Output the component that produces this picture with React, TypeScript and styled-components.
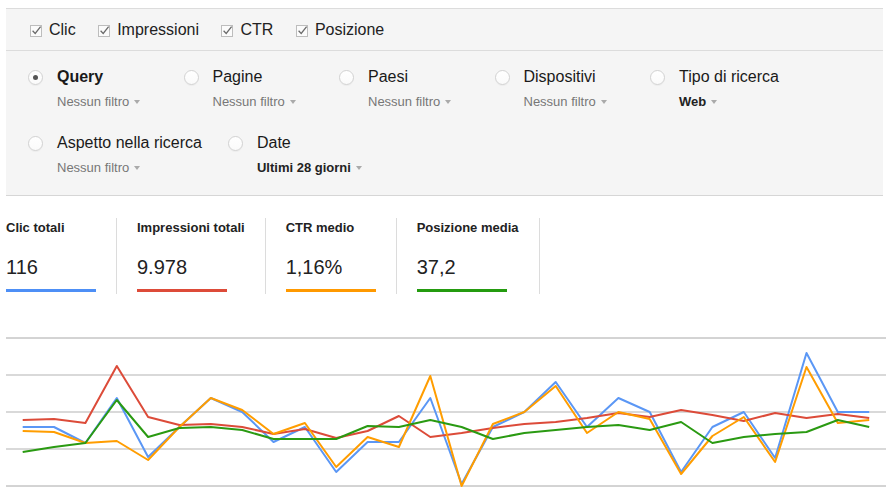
import React from "react";
import styled, { createGlobalStyle } from "styled-components";

const GlobalStyle = createGlobalStyle`
  body {
    margin: 0;
    background: #fff;
    font-family: "Liberation Sans", Arial, sans-serif;
    color: #222;
  }
`;

const Page = styled.div`
  padding: 8px 0 0 6px;
`;

const Panel = styled.div`
  width: 877px;
  background: #f5f5f5;
  border-top: 1px solid #dcdcdc;
  border-bottom: 1px solid #d6d6d6;
`;

const ToggleBar = styled.div`
  display: flex;
  align-items: center;
  height: 40px;
  padding: 1px 0 0 24px;
  border-bottom: 1px solid #dcdcdc;
`;

const ToggleItem = styled.label`
  display: flex;
  align-items: center;
  gap: 6px;
  margin-right: 22.5px;
  font-size: 16px;
  color: #222;
`;

const DimensionArea = styled.div`
  display: flex;
  flex-direction: column;
  gap: 23px;
  padding: 16px 0 19px 22px;
`;

const DimRow = styled.div`
  display: flex;
`;

const DimItem = styled.div`
  display: flex;
  align-items: flex-start;
  margin-right: 26px;
`;

const Radio = styled.span<{ $checked?: boolean }>`
  position: relative;
  box-sizing: border-box;
  width: 15px;
  height: 15px;
  margin: 3px 14px 0 0;
  border-radius: 50%;
  border: 1px solid #d2d2d2;
  background: linear-gradient(#fff, #fafafa);
  box-shadow: 0 1px 1px rgba(0, 0, 0, 0.04);

  &::after {
    content: "";
    display: ${(p) => (p.$checked ? "block" : "none")};
    position: absolute;
    left: 4px;
    top: 4px;
    width: 5px;
    height: 5px;
    border-radius: 50%;
    background: #555;
  }
`;

const DimText = styled.div`
  display: flex;
  flex-direction: column;
  min-width: 100.5px;
`;

const DimLabel = styled.div<{ $active?: boolean }>`
  font-size: 16px;
  line-height: 20px;
  font-weight: ${(p) => (p.$active ? 700 : 400)};
  color: #1a1a1a;
  white-space: nowrap;
`;

const DimFilter = styled.div<{ $set?: boolean }>`
  display: flex;
  align-items: center;
  margin-top: 7px;
  font-size: 13px;
  line-height: 16px;
  white-space: nowrap;
  font-weight: ${(p) => (p.$set ? 700 : 400)};
  color: ${(p) => (p.$set ? "#222" : "#777")};
`;

const Caret = styled.span`
  margin-left: 5px;
  width: 0;
  height: 0;
  border-left: 3.5px solid transparent;
  border-right: 3.5px solid transparent;
  border-top: 4px solid #aaa;
`;

const Metrics = styled.div`
  display: flex;
  margin-top: 22px;
`;

const Metric = styled.div`
  padding: 2px 20px 0 20px;
  border-right: 1px solid #dcdcdc;

  &:first-child {
    padding-left: 0;
  }
`;

const MetricLabel = styled.div`
  font-size: 13px;
  line-height: 16px;
  font-weight: 700;
  color: #222;
  white-space: nowrap;
`;

const MetricValue = styled.div`
  margin-top: 18px;
  font-size: 20px;
  line-height: 26px;
  color: #222;
`;

const MetricBar = styled.div<{ $color: string }>`
  width: 90px;
  height: 3px;
  margin-top: 9px;
  margin-bottom: 2px;
  background: ${(p) => p.$color};
`;

const Chart = styled.svg`
  display: block;
  margin-top: 42px;
`;

const CheckBox = () => (
  <svg width="13" height="13" viewBox="0 0 13 13">
    <rect x="0.5" y="1.5" width="11" height="11" fill="#fbfbfb" stroke="#bdbdbd" />
    <path d="M2.6 6.8 L5.2 9.4 L10.6 2.6" fill="none" stroke="#6b6b6b" strokeWidth="1.3" />
  </svg>
);

const toggles = ["Clic", "Impressioni", "CTR", "Posizione"];

type Dim = { label: string; filter: string; active?: boolean; set?: boolean };

const rows: Dim[][] = [
  [
    { label: "Query", filter: "Nessun filtro", active: true },
    { label: "Pagine", filter: "Nessun filtro" },
    { label: "Paesi", filter: "Nessun filtro" },
    { label: "Dispositivi", filter: "Nessun filtro" },
    { label: "Tipo di ricerca", filter: "Web", set: true },
  ],
  [
    { label: "Aspetto nella ricerca", filter: "Nessun filtro" },
    { label: "Date", filter: "Ultimi 28 giorni", set: true },
  ],
];

const COLORS = {
  blue: "#5b97f5",
  red: "#dc4b39",
  orange: "#ff9d00",
  green: "#2a9a12",
};

const metrics = [
  { label: "Clic totali", value: "116", color: "#4d8ff6" },
  { label: "Impressioni totali", value: "9.978", color: "#dd4b39" },
  { label: "CTR medio", value: "1,16%", color: "#ff9900" },
  { label: "Posizione media", value: "37,2", color: "#249b0f" },
];

const series: { color: string; ys: number[] }[] = [
  {
    color: COLORS.blue,
    ys: [427, 427, 443, 398, 457, 427, 398, 412, 442, 427, 472, 442, 442, 398, 484, 427, 412, 382, 427, 398, 412, 472, 427, 412, 458, 353, 412, 412],
  },
  {
    color: COLORS.red,
    ys: [420, 419, 423, 366, 417, 425, 424, 427, 434, 429, 438, 431, 416, 437, 433, 428, 424, 422, 418, 413, 417, 410, 415, 421, 413, 418, 414, 418],
  },
  {
    color: COLORS.orange,
    ys: [431, 432, 443, 441, 460, 427, 398, 410, 434, 423, 467, 437, 447, 376, 486, 424, 412, 386, 433, 412, 419, 474, 436, 417, 462, 367, 423, 420],
  },
  {
    color: COLORS.green,
    ys: [452, 447, 443, 400, 437, 428, 427, 430, 439, 439, 439, 426, 427, 420, 427, 439, 433, 430, 427, 425, 430, 422, 443, 437, 434, 432, 420, 427],
  },
];

const gridYs = [338, 375, 412, 449, 486];

const px = (i: number) => 22.7 + i * 31.35;

export default function App() {
  return (
    <Page>
      <GlobalStyle />
      <Panel>
        <ToggleBar>
          {toggles.map((t) => (
            <ToggleItem key={t}>
              <CheckBox />
              {t}
            </ToggleItem>
          ))}
        </ToggleBar>
        <DimensionArea>
          {rows.map((row, ri) => (
            <DimRow key={ri}>
              {row.map((d) => (
                <DimItem key={d.label}>
                  <Radio $checked={d.active} />
                  <DimText>
                    <DimLabel $active={d.active}>{d.label}</DimLabel>
                    <DimFilter $set={d.set}>
                      {d.filter}
                      <Caret />
                    </DimFilter>
                  </DimText>
                </DimItem>
              ))}
            </DimRow>
          ))}
        </DimensionArea>
      </Panel>

      <Metrics>
        {metrics.map((m) => (
          <Metric key={m.label}>
            <MetricLabel>{m.label}</MetricLabel>
            <MetricValue>{m.value}</MetricValue>
            <MetricBar $color={m.color} />
          </Metric>
        ))}
      </Metrics>

      <Chart width="882" height="154" viewBox="6 336 882 154">
        {gridYs.map((y, i) => (
          <line
            key={y}
            x1="6"
            x2="886"
            y1={y}
            y2={y}
            stroke={i === 0 || i === gridYs.length - 1 ? "#a8a8a8" : "#cccccc"}
            strokeWidth={i === 0 || i === gridYs.length - 1 ? 1 : 1.5}
          />
        ))}
        {series.map((s) => (
          <polyline
            key={s.color}
            fill="none"
            stroke={s.color}
            strokeWidth="2"
            strokeLinejoin="round"
            points={s.ys.map((y, i) => `${px(i).toFixed(1)},${y}`).join(" ")}
          />
        ))}
      </Chart>
    </Page>
  );
}
